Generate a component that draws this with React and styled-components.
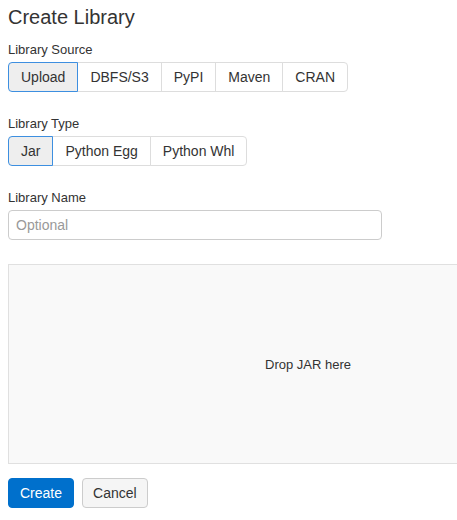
import React, { useState } from 'react'
import styled, { createGlobalStyle } from 'styled-components'

const GlobalStyle = createGlobalStyle`
  body {
    margin: 0;
    font-family: "Liberation Sans", Arial, sans-serif;
    color: #333;
    background: #fff;
    overflow-x: hidden;
  }
`

const Page = styled.div`
  padding: 5px 8px 8px;
  width: 600px;
`

const Title = styled.h1`
  margin: 0 0 13px;
  font-size: 20px;
  font-weight: 400;
  line-height: 24px;
  color: #333;
`

const Field = styled.div`
  margin-bottom: 24px;
`

const Label = styled.div`
  font-size: 13px;
  line-height: 16px;
  margin-bottom: 4px;
  color: #333;
`

const Group = styled.div`
  display: inline-flex;
`

const Seg = styled.button`
  font-family: inherit;
  font-size: 14px;
  line-height: 20px;
  padding: 4px 12px;
  margin-left: -1px;
  color: #333;
  cursor: pointer;
  background: ${p => (p.$active ? '#eee' : '#fff')};
  border: 1px solid ${p => (p.$active ? '#3d8fe0' : '#ddd')};
  position: relative;
  z-index: ${p => (p.$active ? 1 : 0)};
  border-radius: 0;
  &:first-child {
    margin-left: 0;
    border-radius: 4px 0 0 4px;
  }
  &:last-child {
    border-radius: 0 4px 4px 0;
  }
`

const Input = styled.input`
  box-sizing: border-box;
  width: 374px;
  height: 30px;
  padding: 4px 7px;
  font-family: inherit;
  font-size: 14px;
  color: #333;
  border: 1px solid #ccc;
  border-radius: 4px;
  outline: none;
  &::placeholder {
    color: #999;
  }
`

const DropZone = styled.div`
  box-sizing: border-box;
  height: 200px;
  width: 600px;
  display: flex;
  align-items: center;
  justify-content: center;
  background: #f9f9f9;
  border: 1px solid #e0e0e0;
  font-size: 13px;
  color: #333;
  margin-bottom: 14px;
`

const Actions = styled.div`
  display: flex;
  gap: 8px;
`

const Button = styled.button`
  font-family: inherit;
  font-size: 14px;
  line-height: 20px;
  padding: 4px ${p => (p.$primary ? 11 : 10)}px;
  border-radius: 4px;
  cursor: pointer;
  color: ${p => (p.$primary ? '#fff' : '#333')};
  background: ${p => (p.$primary ? '#0070cc' : '#f5f5f5')};
  border: 1px solid ${p => (p.$primary ? '#0070cc' : '#ccc')};
`

const sources = ['Upload', 'DBFS/S3', 'PyPI', 'Maven', 'CRAN']
const types = ['Jar', 'Python Egg', 'Python Whl']

export default function App() {
  const [source, setSource] = useState('Upload')
  const [type, setType] = useState('Jar')

  return (
    <Page>
      <GlobalStyle />
      <Title>Create Library</Title>

      <Field>
        <Label>Library Source</Label>
        <Group>
          {sources.map(s => (
            <Seg key={s} $active={s === source} onClick={() => setSource(s)}>
              {s}
            </Seg>
          ))}
        </Group>
      </Field>

      <Field>
        <Label>Library Type</Label>
        <Group>
          {types.map(t => (
            <Seg key={t} $active={t === type} onClick={() => setType(t)}>
              {t}
            </Seg>
          ))}
        </Group>
      </Field>

      <Field>
        <Label>Library Name</Label>
        <Input placeholder="Optional" />
      </Field>

      <DropZone>Drop {type === 'Jar' ? 'JAR' : type === 'Python Egg' ? 'Egg' : 'Whl'} here</DropZone>

      <Actions>
        <Button $primary>Create</Button>
        <Button>Cancel</Button>
      </Actions>
    </Page>
  )
}
